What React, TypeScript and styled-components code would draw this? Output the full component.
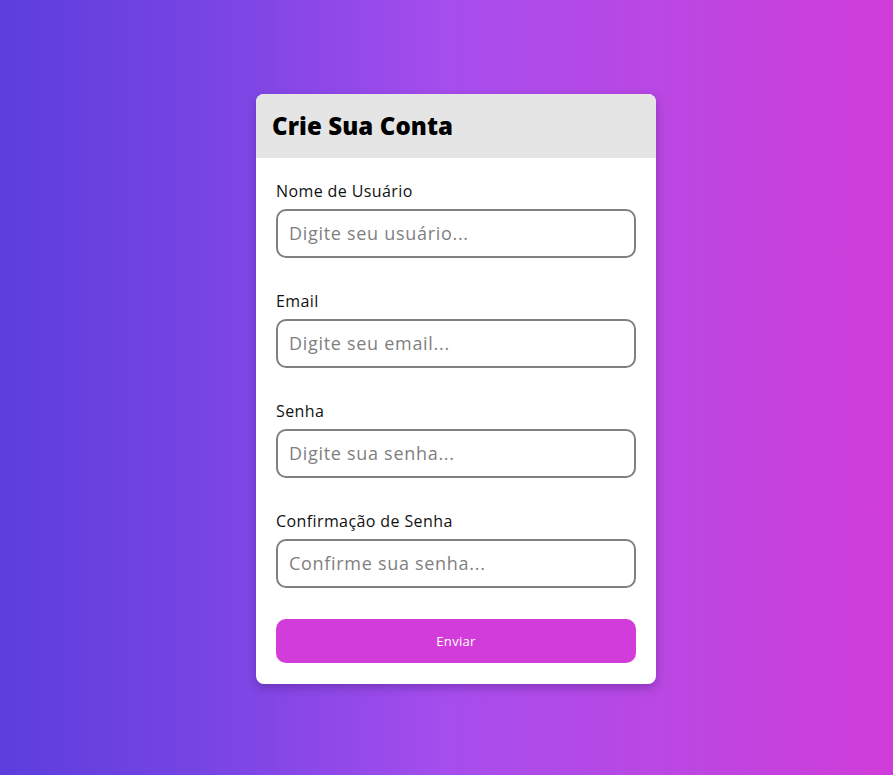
import styled, { createGlobalStyle } from "styled-components";

const GlobalStyle = createGlobalStyle`
  * {
    box-sizing: border-box;
  }

  body {
    margin: 0;
    font-family: "Open Sans", "Liberation Sans", sans-serif;
  }
`;

const fields = [
  { label: "Nome de Usuário", placeholder: "Digite seu usuário...", type: "text" },
  { label: "Email", placeholder: "Digite seu email...", type: "email" },
  { label: "Senha", placeholder: "Digite sua senha...", type: "password" },
  { label: "Confirmação de Senha", placeholder: "Confirme sua senha...", type: "password" },
];

const App = () => {
  return (
    <Page>
      <GlobalStyle />
      <Card>
        <CardHeader>
          <Title>Crie Sua Conta</Title>
        </CardHeader>
        <Form onSubmit={(e) => e.preventDefault()}>
          {fields.map((f) => (
            <Field key={f.label}>
              <Label>{f.label}</Label>
              <Input type={f.type} placeholder={f.placeholder} />
            </Field>
          ))}
          <SubmitButton type="submit">Enviar</SubmitButton>
        </Form>
      </Card>
    </Page>
  );
};

const Page = styled.div`
  min-height: 100vh;
  display: flex;
  align-items: center;
  justify-content: center;
  padding: 2px 0 0 19px;
  background: linear-gradient(
    90deg,
    #5c3edc 0%,
    #7a45e4 25%,
    #a64ded 50%,
    #bb47e2 75%,
    #cf3cd9 100%
  );
`;

const Card = styled.div`
  width: 400px;
  background: #ffffff;
  border-radius: 8px;
  overflow: hidden;
  box-shadow: 0 4px 10px rgba(60, 20, 110, 0.35);
`;

const CardHeader = styled.div`
  height: 64px;
  display: flex;
  align-items: center;
  padding: 0 16px;
  background: #e5e5e5;
`;

const Title = styled.h1`
  margin: 0;
  font-size: 24px;
  font-weight: 800;
  color: #000;
  letter-spacing: 0.1px;
`;

const Form = styled.form`
  display: flex;
  flex-direction: column;
  gap: 33px;
  padding: 23px 20px 21px;
`;

const Field = styled.div`
  display: flex;
  flex-direction: column;
  gap: 8px;
`;

const Label = styled.label`
  font-size: 16px;
  line-height: 20px;
  letter-spacing: 0.4px;
  color: #111;
`;

const Input = styled.input`
  height: 49px;
  padding: 0 11px;
  border: 2px solid #808080;
  border-radius: 10px;
  font-family: inherit;
  font-size: 18px;
  letter-spacing: 0.7px;
  color: #222;
  outline: none;

  &::placeholder {
    color: #7f7f7f;
  }
`;

const SubmitButton = styled.button`
  height: 44px;
  margin-top: -2px;
  border: none;
  border-radius: 10px;
  background: #d23cda;
  color: #fff;
  font-family: inherit;
  font-size: 13px;
  letter-spacing: 0.3px;
  cursor: pointer;
`;

export default App;
